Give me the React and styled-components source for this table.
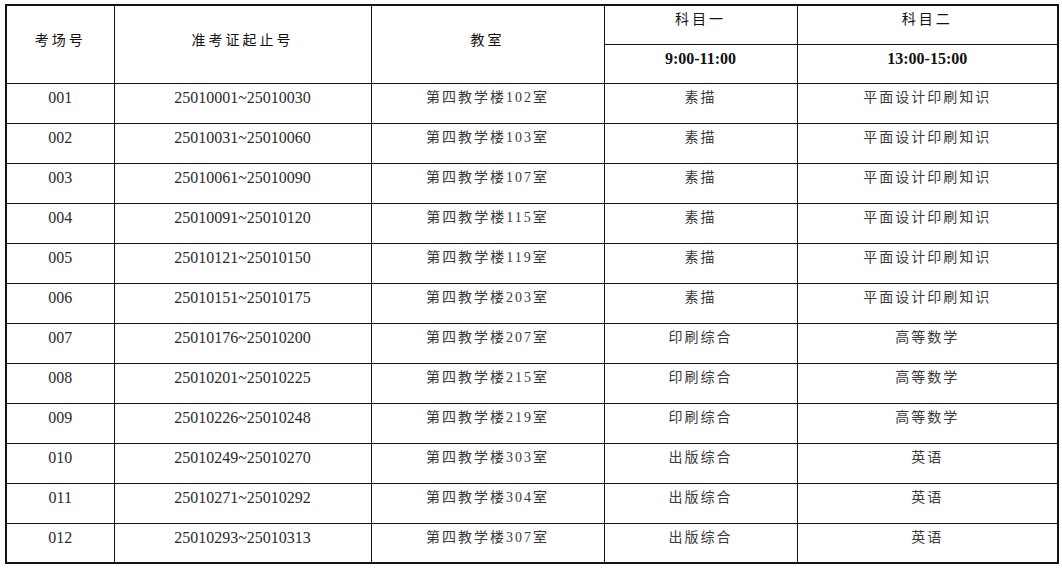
import React from "react";
import styled, { createGlobalStyle } from "styled-components";

const GlobalStyle = createGlobalStyle`
  html, body {
    margin: 0;
    padding: 0;
    background: #ffffff;
  }
`;

const Page = styled.div`
  padding: 4px 0 0 5px;
  width: 1062px;
  height: 571px;
  box-sizing: border-box;
  background: #fff;
`;

const Table = styled.table`
  border-collapse: collapse;
  table-layout: fixed;
  width: 1052px;
  border: 2px solid #111;
  font-family: "Liberation Serif", "Noto Sans CJK SC", serif;
  color: #2a2a2a;
`;

const Cell = styled.td`
  border: 1px solid #111;
  height: ${(p) => p.$h || 39}px;
  padding: 0 0 ${(p) => p.$pb ?? 10}px 0;
  box-sizing: border-box;
  text-align: center;
  vertical-align: middle;
  font-size: ${(p) => (p.$num ? 16 : 14)}px;
  line-height: 20px;
  letter-spacing: ${(p) => (p.$num ? 0 : 2)}px;
  white-space: nowrap;
  color: ${(p) => (p.$num ? "#2a2a2a" : "#3a3a3a")};
`;

const Head = styled(Cell).attrs({ as: "th" })`
  font-weight: ${(p) => (p.$bold ? 700 : 400)};
  font-size: ${(p) => (p.$num ? 16 : 14)}px;
  letter-spacing: ${(p) => (p.$num ? 0 : 3)}px;
  color: #111;
`;

const rows = [
  ["001", "25010001~25010030", "第四教学楼102室", "素描", "平面设计印刷知识"],
  ["002", "25010031~25010060", "第四教学楼103室", "素描", "平面设计印刷知识"],
  ["003", "25010061~25010090", "第四教学楼107室", "素描", "平面设计印刷知识"],
  ["004", "25010091~25010120", "第四教学楼115室", "素描", "平面设计印刷知识"],
  ["005", "25010121~25010150", "第四教学楼119室", "素描", "平面设计印刷知识"],
  ["006", "25010151~25010175", "第四教学楼203室", "素描", "平面设计印刷知识"],
  ["007", "25010176~25010200", "第四教学楼207室", "印刷综合", "高等数学"],
  ["008", "25010201~25010225", "第四教学楼215室", "印刷综合", "高等数学"],
  ["009", "25010226~25010248", "第四教学楼219室", "印刷综合", "高等数学"],
  ["010", "25010249~25010270", "第四教学楼303室", "出版综合", "英语"],
  ["011", "25010271~25010292", "第四教学楼304室", "出版综合", "英语"],
  ["012", "25010293~25010313", "第四教学楼307室", "出版综合", "英语"],
];

export default function App() {
  return (
    <>
      <GlobalStyle />
      <Page>
        <Table>
          <colgroup>
            <col style={{ width: 108 }} />
            <col style={{ width: 257 }} />
            <col style={{ width: 233 }} />
            <col style={{ width: 193 }} />
            <col style={{ width: 261 }} />
          </colgroup>
          <thead>
            <tr>
              <Head rowSpan={2} $pb={6}>考场号</Head>
              <Head rowSpan={2} $pb={6}>准考证起止号</Head>
              <Head rowSpan={2} $pb={6}>教室</Head>
              <Head $pb={9}>科目一</Head>
              <Head $pb={9}>科目二</Head>
            </tr>
            <tr>
              <Head $num $bold>9:00-11:00</Head>
              <Head $num $bold>13:00-15:00</Head>
            </tr>
          </thead>
          <tbody>
            {rows.map((r) => (
              <tr key={r[0]}>
                <Cell $num $h={40}>{r[0]}</Cell>
                <Cell $num $h={40}>{r[1]}</Cell>
                <Cell $h={40}>{r[2]}</Cell>
                <Cell $h={40}>{r[3]}</Cell>
                <Cell $h={40}>{r[4]}</Cell>
              </tr>
            ))}
          </tbody>
        </Table>
      </Page>
    </>
  );
}
